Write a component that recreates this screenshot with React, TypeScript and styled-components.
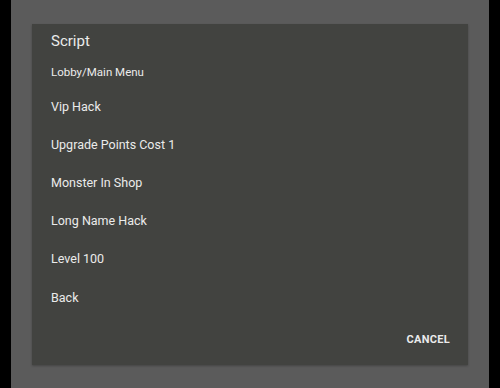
import React from "react";
import styled, { createGlobalStyle } from "styled-components";

const Global = createGlobalStyle`
  html, body { margin: 0; padding: 0; background: #000; }
  body { font-family: Roboto, "Noto Sans", "Liberation Sans", sans-serif; }
`;

const Screen = styled.div`
  margin-left: 11px;
  width: 478px;
  height: 388px;
  background: #5b5b5b;
  padding: 24px 21px 0 21px;
  box-sizing: border-box;
`;

const Dialog = styled.div`
  width: 436px;
  height: 341px;
  background: #424340;
  box-shadow: 0 1px 2px rgba(0, 0, 0, 0.25);
  display: flex;
  flex-direction: column;
  color: #ebebeb;
`;

const Title = styled.div`
  padding: 7px 0 0 19px;
  height: 34px;
  box-sizing: border-box;
  font-size: 15px;
  line-height: 20px;
`;

const Subtitle = styled.div`
  padding: 7px 0 0 19px;
  height: 29px;
  box-sizing: border-box;
  font-size: 11.5px;
  line-height: 14px;
`;

const Item = styled.div`
  height: 38.2px;
  display: flex;
  align-items: center;
  padding-left: 19px;
  font-size: 12.5px;
`;

const Footer = styled.div`
  display: flex;
  justify-content: flex-end;
  padding: 16px 18px 0 0;
`;

const Cancel = styled.div`
  font-size: 11px;
  font-weight: 700;
  letter-spacing: 0.3px;
  line-height: 16px;
`;

const items = [
  "Vip Hack",
  "Upgrade Points Cost 1",
  "Monster In Shop",
  "Long Name Hack",
  "Level 100",
  "Back",
];

export default function App() {
  return (
    <>
      <Global />
      <Screen>
        <Dialog>
          <Title>Script</Title>
          <Subtitle>Lobby/Main Menu</Subtitle>
          {items.map((t) => (
            <Item key={t}>{t}</Item>
          ))}
          <Footer>
            <Cancel>CANCEL</Cancel>
          </Footer>
        </Dialog>
      </Screen>
    </>
  );
}
